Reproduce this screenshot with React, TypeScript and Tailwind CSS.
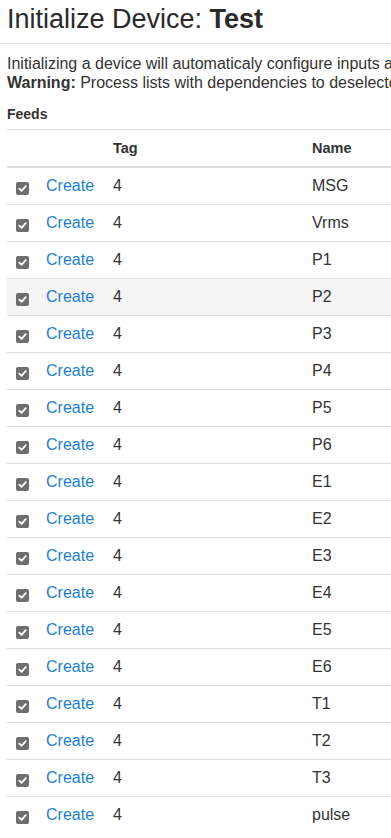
const feeds = ["MSG", "Vrms", "P1", "P2", "P3", "P4", "P5", "P6", "E1", "E2", "E3", "E4", "E5", "E6", "T1", "T2", "T3", "pulse"]

function CheckBox() {
    return (
        <span className="flex w-[13px] h-[13px] rounded-[2px] bg-[#6e6e6e] items-center justify-center">
            <svg width="9" height="9" viewBox="0 0 10 10" fill="none">
                <path d="M1.5 5.2 L4 7.6 L8.6 2.4" stroke="white" strokeWidth="2" strokeLinecap="round" strokeLinejoin="round" />
            </svg>
        </span>
    )
}

export default function App() {
    return (
        <div className="w-[391px] h-[838px] overflow-hidden bg-white text-[#333] font-['Liberation_Sans',Arial,sans-serif]">
            <div className="pt-[4px] pb-[9px] px-[7px] border-b border-[#e5e5e5]">
                <h3 className="text-[27px] leading-[30px] whitespace-nowrap text-[#2a2a2a]">
                    Initialize Device: <b>Test</b>
                </h3>
            </div>
            <div className="px-[7px] pt-[10px]">
                <p className="text-[16px] leading-[19px] whitespace-nowrap">
                    Initializing a device will automaticaly configure inputs and associated feeds as described.
                    <br />
                    <b>Warning:</b> Process lists with dependencies to deselected feeds will be skipped as a whole.
                </p>
                <div className="mt-[12px] text-[14px] leading-[20px] font-bold">Feeds</div>
                <table className="mt-[5px] w-[500px] border-collapse text-[16px] leading-[20px]">
                    <thead>
                        <tr className="border-t border-[#ddd] border-b-2">
                            <th className="w-[31px] p-2"></th>
                            <th className="w-[67px] p-2"></th>
                            <th className="w-[199px] p-2 text-left text-[14.5px] font-bold">Tag</th>
                            <th className="p-2 text-left text-[14.5px] font-bold">Name</th>
                        </tr>
                    </thead>
                    <tbody>
                        {feeds.map((name, i) => (
                            <tr key={name} className={`border-t border-[#ddd] ${i === 3 ? "bg-[#f5f5f5]" : ""}`}>
                                <td className="p-2 pl-[9px] align-top">
                                    <div className="h-[20px] pt-[6px]"><CheckBox /></div>
                                </td>
                                <td className="p-2 text-[#1a7fd4]">Create</td>
                                <td className="p-2">4</td>
                                <td className="p-2">{name}</td>
                            </tr>
                        ))}
                    </tbody>
                </table>
            </div>
        </div>
    )
}
